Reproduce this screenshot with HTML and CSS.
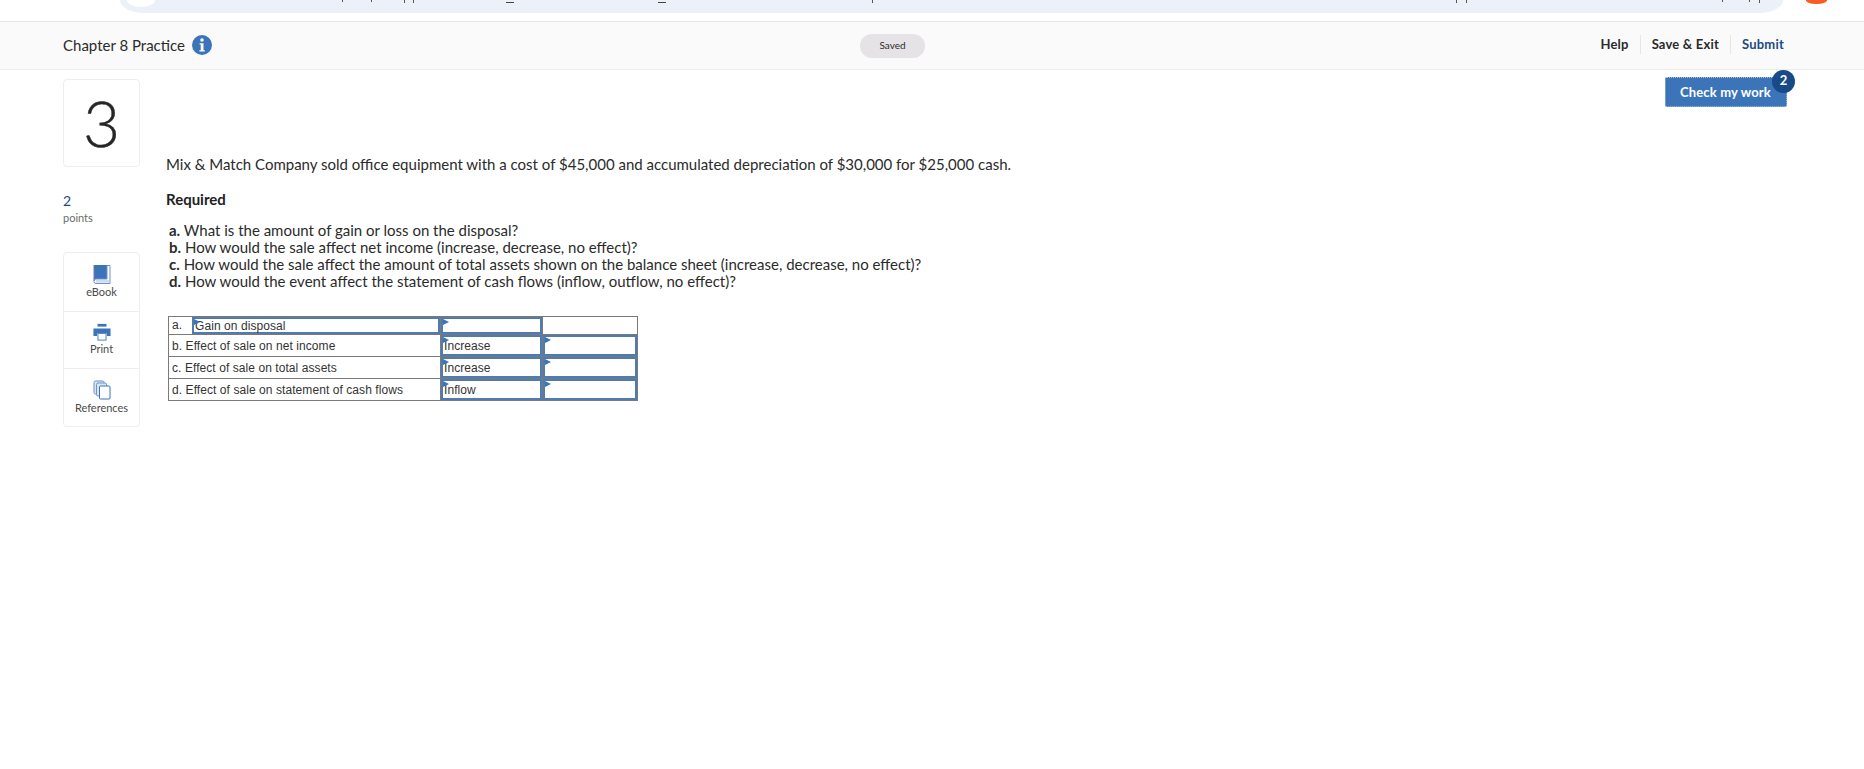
FILE: index.html
```html
<!DOCTYPE html>
<html lang="en">
<head>
<meta charset="utf-8">
<title>Chapter 8 Practice</title>
<link rel="stylesheet" href="styles.css">
</head>
<body>
<div class="browser-strip">
  <div class="address-pill">
    <span class="pill-circle"></span>
    <svg class="url-clip" viewBox="0 0 1663 3" aria-hidden="true"><path d="M222 0h1v2h-1zM251 0h1v2h-1zM284 0h1v3h-1zM293 0h1v3h-1zM1336 0h1v3h-1zM1346 0h1v3h-1zM752 0h1v3h-1zM1602 0h1v2h-1zM1629 0h1v2h-1zM1639 0h1v3h-1z" fill="#555"/><path d="M386 2h8v1h-8zM538 2h8v1h-8z" fill="#444"/></svg>
  </div>
  <span class="avatar"></span>
</div>
<header class="topbar">
  <div class="topbar-left">
    <span class="assignment-title">Chapter 8 Practice</span>
    <svg class="info-icon" viewBox="0 0 20 20" aria-hidden="true"><circle cx="10" cy="10" r="10" fill="#3b74b8"/><circle cx="10" cy="5" r="1.800" fill="#fff"/><path d="M7.600 8.200h3.900v7h1.300v1.300H7.400v-1.300h1.300V9.500H7.600z" fill="#fff"/></svg>
  </div>
  <span class="saved-pill">Saved</span>
  <nav class="topbar-right">
    <span class="nav-item">Help</span>
    <span class="nav-item">Save &amp; Exit</span>
    <span class="nav-item nav-submit">Submit</span>
  </nav>
</header>
<main class="layout">
  <aside class="sidebar">
    <div class="question-number">3</div>
    <div class="points"><span class="points-value">2</span><span class="points-label">points</span></div>
    <div class="tools">
      <div class="tool">
        <svg class="tool-icon" viewBox="0 0 18 20" aria-hidden="true"><path d="M1 1h13v14H3a2 2 0 0 0-2 1.500z" fill="#3b74b8"/><path d="M14 1.500h3v18H3a2 2 0 0 1-2-2v-.5a2 2 0 0 1 2-2h11z" fill="#fff" stroke="#6d93c9"/><path d="M3 16.800h13M3 18h13" stroke="#9db8dc" stroke-width=".7"/><path d="M1 1v16" stroke="#7a70b0"/></svg>
        <span>eBook</span>
      </div>
      <div class="tool">
        <svg class="tool-icon tool-icon-print" viewBox="0 0 20 20" aria-hidden="true"><path d="M5 1h10v3H5z" fill="#3b74b8"/><path d="M0.500 6h19v8.500h-4v-3h-11v3h-4z" fill="#3b74b8"/><rect x="5.500" y="11.500" width="9" height="7.500" fill="#fff" stroke="#3b74b8"/></svg>
        <span>Print</span>
      </div>
      <div class="tool">
        <svg class="tool-icon" viewBox="0 0 18 20" aria-hidden="true"><rect x="1" y="1" width="10" height="13" rx="1.500" fill="#dbe6f4" stroke="#6d93c9"/><rect x="3.500" y="3" width="10" height="13" rx="1.500" fill="#dbe6f4" stroke="#6d93c9"/><rect x="6.500" y="6" width="10.500" height="13" rx="1" fill="#fff" stroke="#3b74b8"/></svg>
        <span>References</span>
      </div>
    </div>
  </aside>
  <section class="content">
    <div class="action-row">
      <button class="check-work" type="button">Check my work<span class="badge">2</span></button>
    </div>
    <p class="intro">Mix &amp; Match Company sold office equipment with a cost of $45,000 and accumulated depreciation of $30,000 for $25,000 cash.</p>
    <h2 class="required">Required</h2>
    <ol class="parts">
      <li><b>a.</b> What is the amount of gain or loss on the disposal?</li>
      <li><b>b.</b> How would the sale affect net income (increase, decrease, no effect)?</li>
      <li><b>c.</b> How would the sale affect the amount of total assets shown on the balance sheet (increase, decrease, no effect)?</li>
      <li><b>d.</b> How would the event affect the statement of cash flows (inflow, outflow, no effect)?</li>
    </ol>
    <table class="answers">
      <colgroup><col class="col-label"><col class="col-mid"><col class="col-last"></colgroup>
      <tr class="row-a">
        <td class="split-cell"><div class="split"><span class="split-letter">a.</span><span class="input flag grow">Gain on disposal</span></div></td>
        <td class="entry"><span class="input flag">&nbsp;</span></td>
        <td></td>
      </tr>
      <tr>
        <td>b. Effect of sale on net income</td>
        <td class="entry"><span class="input flag">Increase</span></td>
        <td class="entry"><span class="input flag">&nbsp;</span></td>
      </tr>
      <tr>
        <td>c. Effect of sale on total assets</td>
        <td class="entry"><span class="input flag">Increase</span></td>
        <td class="entry"><span class="input flag">&nbsp;</span></td>
      </tr>
      <tr>
        <td>d. Effect of sale on statement of cash flows</td>
        <td class="entry"><span class="input flag">Inflow</span></td>
        <td class="entry"><span class="input flag">&nbsp;</span></td>
      </tr>
    </table>
  </section>
</main>
</body>
</html>
```
FILE: styles.css
```css
* { box-sizing: border-box; }
html, body { margin: 0; padding: 0; height: 100%; overflow: hidden; background: #fff; }
body { font-family: Lato, "Open Sans", sans-serif; color: #2b2b2b; }

.browser-strip { height: 22px; display: flex; padding-left: 120px; border-bottom: 1px solid #e4e4e4; }
.address-pill { position: relative; width: 1663px; height: 13px; background: #ebf0f9; border-radius: 0 0 24px 24px / 0 0 13px 13px; padding-left: 7px; }
.url-clip { position: absolute; left: 0; top: 0; width: 1663px; height: 3px; }
.pill-circle { display: block; width: 28px; height: 7px; background: #fff; border-radius: 0 0 14px 14px / 0 0 7px 7px; }
.avatar { width: 21px; height: 4px; margin-left: 23px; background: #fb5a22; border-radius: 0 0 11px 11px / 0 0 4px 4px; }

.topbar { height: 48px; background: #fafafa; border-bottom: 1px solid #ededed; display: flex; align-items: center; padding: 0 80px 2px 63px; }
.topbar-left { width: 797px; display: flex; align-items: center; gap: 7px; }
.assignment-title { font-size: 15px; }
.info-icon { width: 20px; height: 20px; }
.saved-pill { width: 65px; height: 24px; margin-top: 2px; padding-bottom: 2px; border-radius: 12px; background: #e5e3e5; font-size: 10px; display: flex; align-items: center; justify-content: center; }
.topbar-right { flex: 1; display: flex; justify-content: flex-end; align-items: center; font-size: 13px; font-weight: 700; letter-spacing: .2px; }
.nav-item { padding: 0 11px; height: 19px; line-height: 19px; border-left: 1px solid #e6e6e6; }
.nav-item:first-child { border-left: 0; }
.nav-submit { color: #1d4a82; padding-right: 0; }

.layout { display: flex; padding-left: 63px; }
.sidebar { width: 77px; flex: none; padding-top: 9px; }
.question-number { height: 88px; border: 1px solid #eeeeee; border-radius: 4px; display: flex; align-items: center; justify-content: center; font-size: 64px; font-weight: 300; -webkit-text-stroke: .4px #262626; color: #262626; line-height: 1; }
.points { margin-top: 25px; display: flex; flex-direction: column; }
.points-value { font-size: 14px; line-height: 17px; color: #1d4a82; }
.points-label { font-size: 11px; line-height: 17px; color: #6b6b6b; }
.tools { margin-top: 26px; border: 1px solid #eeeeee; border-radius: 4px; }
.tool { height: 57.500px; border-top: 1px solid #eeeeee; display: flex; flex-direction: column; align-items: center; padding-top: 11px; font-size: 11px; color: #4a4a4a; line-height: 13px; }
.tool:first-child { border-top: 0; }
.tool-icon { width: 18px; height: 20px; margin-bottom: 1px; }
.tool-icon-print { height: 18px; }

.content { flex: 1; padding-left: 26px; }
.action-row { display: flex; justify-content: flex-end; padding: 7px 77px 0 0; height: 85px; }
.check-work { position: relative; width: 122px; height: 30px; background: #3b74b8; color: #fff; border: 1px dotted #a9c4e4; border-radius: 2px; font: 700 13px Lato, sans-serif; letter-spacing: .15px; text-align: left; padding: 0 0 0 14px; }
.badge { position: absolute; top: -8px; right: -9px; width: 23px; height: 23px; border-radius: 50%; background: #174a86; color: #fff; font-size: 13px; line-height: 20px; text-align: center; }

.intro { margin: 0; font-size: 15px; line-height: 18px; }
.required { margin: 17px 0 0; font-size: 15px; line-height: 18px; font-weight: 700; color: #222; }
.parts { list-style: none; margin: 14px 0 0; padding: 0 0 0 3px; font-size: 15px; line-height: 17px; }
.answers { margin: 26px 0 0 2px; width: 469px; table-layout: fixed; border-collapse: collapse; font-family: "Liberation Sans", Arial, sans-serif; font-size: 12px; letter-spacing: .07px; color: #333; }
.col-label { width: 272px; }
.col-mid { width: 102px; }
.col-last { width: 95px; }
.answers td { border: 1px solid #7a7a7a; height: 22px; padding: 0 3px; white-space: nowrap; }
.answers .row-a td { height: 18px; }
.answers td.entry, .answers td.split-cell { padding: 0; }
.split { display: flex; align-items: stretch; }
.split-letter { width: 23px; padding-left: 3px; line-height: 17px; }
.input { position: relative; display: block; height: 21px; border: 2px solid #4f7cb0; padding-left: 1px; line-height: 18px; }
.row-a .input { height: 17px; line-height: 14px; }
.grow { flex: 1; }
.flag::before { content: ""; position: absolute; left: 0; top: 0; border-left: 6px solid #3b74b8; border-top: 3px solid transparent; border-bottom: 3px solid transparent; }
```
